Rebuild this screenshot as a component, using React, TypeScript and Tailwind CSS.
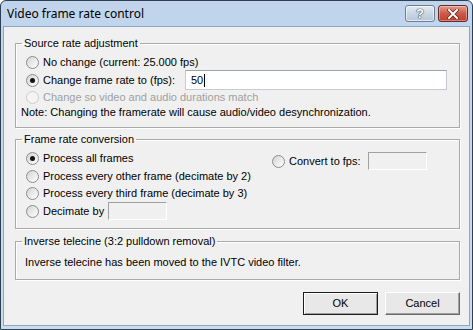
import React from "react";

function Radio({ checked = false, disabled = false }: { checked?: boolean; disabled?: boolean }) {
  return (
    <span
      className={
        disabled
          ? "flex h-[13px] w-[13px] shrink-0 items-center justify-center rounded-full border border-[#cdcdcd] bg-[#f4f4f4]"
          : "flex h-[13px] w-[13px] shrink-0 items-center justify-center rounded-full border border-[#8b8c8c] bg-gradient-to-br from-[#d4d4d4] to-white"
      }
    >
      {checked ? <span className="h-[5px] w-[5px] rounded-full bg-[#151515]" /> : null}
    </span>
  );
}

function Group({ title, className, children }: { title: string; className?: string; children: React.ReactNode }) {
  return (
    <fieldset
      className={`border border-[#a9a9a9] shadow-[1px_1px_0_#fff,inset_1px_1px_0_#fff] ${className ?? ""}`}
    >
      <legend className="ml-[6px] px-[2px] leading-[13px]">{title}</legend>
      {children}
    </fieldset>
  );
}

function DisabledBox({ className }: { className?: string }) {
  return (
    <span
      className={`block h-[18px] w-[59px] shrink-0 border border-t-[#a0a0a0] border-l-[#a0a0a0] border-r-white border-b-white bg-[#f0f0f0] ${className ?? ""}`}
    />
  );
}

export default function App() {
  return (
    <div
      className="flex h-[330px] w-[473px] flex-col overflow-hidden whitespace-nowrap rounded-t-[6px] border border-[#2f3f52] bg-gradient-to-b from-[#c0d5ec] to-[#cbdcef] text-[11px] text-black"
      style={{ fontFamily: '"Liberation Sans", Arial, sans-serif' }}
    >
      {/* title bar */}
      <div className="flex h-[25px] shrink-0 items-center pl-[6px] pr-[4px]">
        <span className="text-[12px] text-black" style={{ fontFamily: '"Noto Sans", "Open Sans", sans-serif' }}>
          Video frame rate control
        </span>
        <div className="ml-auto flex gap-[3px] self-start pt-[4px]">
          <div className="flex h-[17px] w-[30px] items-center justify-center rounded-[3px] border border-[#6f7f92] bg-gradient-to-b from-[#e4ecf5] via-[#c9d6e4] to-[#b5c6d9] shadow-[inset_0_0_0_1px_rgba(255,255,255,0.6)]">
            <span className="text-[13px] font-bold leading-none text-white [text-shadow:0_0_1px_#34465c,0_0_1px_#34465c,0_0_1px_#34465c]">?</span>
          </div>
          <div className="flex h-[17px] w-[30px] items-center justify-center rounded-[3px] border border-[#6a2a24] bg-gradient-to-b from-[#e49a8c] via-[#cc5a48] to-[#c0402d] shadow-[inset_0_0_0_1px_rgba(255,255,255,0.35)]">
            <svg width="12" height="10" viewBox="0 0 12 10">
              <path d="M2 1 L10 9 M10 1 L2 9" stroke="#4a1a14" strokeWidth="3.2" strokeLinecap="square" />
              <path d="M2 1 L10 9 M10 1 L2 9" stroke="#fff" strokeWidth="2" strokeLinecap="square" />
            </svg>
          </div>
        </div>
      </div>

      {/* client area */}
      <div className="mx-[2px] mb-[3px] flex flex-1 flex-col border border-[#8aa7c8] bg-[#f0f0f0] pl-[11px] pr-[8px] pt-[10px]">
        <Group title="Source rate adjustment" className="w-[445px]">
          <div className="mt-[4px] flex h-[16px] items-center gap-[4px] pl-[10px]">
            <Radio />
            <span>No change (current: 25.000 fps)</span>
          </div>
          <div className="flex h-[20px] items-center gap-[4px] pl-[10px]">
            <Radio checked />
            <span className="w-[138px] shrink-0">Change frame rate to (fps):</span>
            <div className="flex h-[20px] w-[262px] items-center border border-[#c6cad1] border-t-[#9da3ab] bg-white pl-[5px]">
              <span>50</span>
              <span className="ml-[1px] h-[13px] w-[1px] bg-black" />
            </div>
          </div>
          <div className="flex h-[14px] items-center gap-[4px] pl-[10px] text-[#a0a0a0]">
            <Radio disabled />
            <span>Change so video and audio durations match</span>
          </div>
          <div className="mt-[1px] flex h-[14px] items-center pl-[5px] pb-0">
            Note: Changing the framerate will cause audio/video desynchronization.
          </div>
          <div className="h-[8px]" />
        </Group>

        <Group title="Frame rate conversion" className="mt-[5px] w-[445px]">
          <div className="flex">
            <div className="flex w-[256px] flex-col pl-[10px]">
              <div className="mt-[4px] flex h-[16px] items-center gap-[4px]">
                <Radio checked />
                <span>Process all frames</span>
              </div>
              <div className="mt-[2px] flex h-[16px] items-center gap-[4px]">
                <Radio />
                <span>Process every other frame (decimate by 2)</span>
              </div>
              <div className="mt-[1px] flex h-[16px] items-center gap-[4px]">
                <Radio />
                <span>Process every third frame (decimate by 3)</span>
              </div>
              <div className="mt-[1px] flex h-[18px] items-center gap-[4px]">
                <Radio />
                <span className="w-[61px] shrink-0">Decimate by</span>
                <DisabledBox />
              </div>
              <div className="h-[8px]" />
            </div>
            <div className="mt-[6px] flex h-[18px] items-center gap-[4px]">
              <Radio />
              <span className="w-[75px] shrink-0">Convert to fps:</span>
              <DisabledBox />
            </div>
          </div>
        </Group>

        <Group title="Inverse telecine (3:2 pulldown removal)" className="mt-[6px] w-[445px]">
          <div className="mt-[7px] flex h-[14px] items-center pl-[9px]">
            Inverse telecine has been moved to the IVTC video filter.
          </div>
          <div className="h-[10px]" />
        </Group>

        <div className="mt-[12px] flex w-[445px] justify-end gap-[7px]">
          <button className="h-[23px] w-[75px] border border-[#1c1c1c] bg-[#e8e8e8] shadow-[inset_1px_1px_0_#fff,inset_-1px_-1px_0_#a0a0a0]">
            OK
          </button>
          <button className="h-[23px] w-[75px] border border-t-white border-l-white border-r-[#696969] border-b-[#696969] bg-[#e8e8e8] shadow-[inset_-1px_-1px_0_#a0a0a0]">
            Cancel
          </button>
        </div>
      </div>
    </div>
  );
}
